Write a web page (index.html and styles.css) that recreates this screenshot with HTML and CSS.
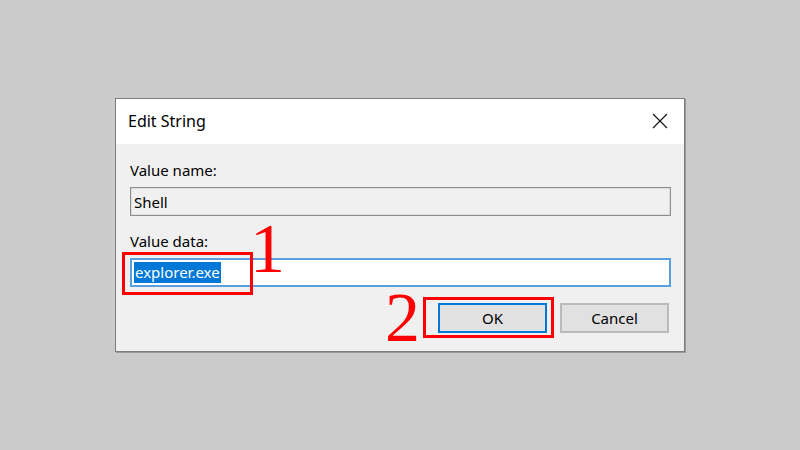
FILE: index.html
```html
<!DOCTYPE html>
<html>
<head>
<meta charset="utf-8">
<link rel="stylesheet" href="styles.css">
</head>
<body>
<div class="dialog">
  <div class="titlebar">
    <span class="title">Edit String</span>
    <svg class="close" width="16" height="16" viewBox="0 0 16 16"><path d="M1 1 L15 15 M15 1 L1 15" stroke="#1a1a1a" stroke-width="1.3" fill="none"/></svg>
  </div>
  <div class="content">
    <div class="label">Value name:</div>
    <div class="field disabled">Shell</div>
    <div class="label second">Value data:</div>
    <div class="field active"><span class="sel">explorer.exe</span></div>
    <div class="buttons">
      <div class="btn ok">OK</div>
      <div class="btn cancel">Cancel</div>
    </div>
  </div>
  <div class="mark rect1"></div>
  <div class="mark rect2"></div>
  <div class="num n1">1</div>
  <div class="num n2">2</div>
</div>
</body>
</html>
```
FILE: styles.css
```css
html, body {
  margin: 0;
  padding: 0;
}
body {
  background: #cbcbcb;
  width: 800px;
  height: 450px;
  overflow: hidden;
  font-family: "Noto Sans", "Open Sans", sans-serif;
  font-size: 15px;
  color: #000;
}
.dialog {
  position: relative;
  margin: 98px 0 0 115px;
  width: 568px;
  height: 252px;
  border: 1px solid #7d7d7d;
  box-shadow: 1px 1px 0 #9a9a9a;
  background: #f0f0f0;
  display: flex;
  flex-direction: column;
}
.titlebar {
  height: 45px;
  background: #fff;
  display: flex;
  align-items: center;
  justify-content: space-between;
  padding: 0 16px 0 12px;
}
.title {
  font-size: 16px;
  margin-top: -2px;
}
.close {
  margin-top: -1px;
}
.content {
  flex: 1;
  padding: 16px 13px 0 14px;
  display: flex;
  flex-direction: column;
}
.label {
  line-height: 20px;
  height: 20px;
}
.label.second {
  margin-top: 15px;
}
.field {
  margin-top: 7px;
  height: 29px;
  box-sizing: border-box;
  display: flex;
  align-items: center;
  padding-left: 3px;
}
.field.disabled {
  border: 1px solid #8e8e8e;
  box-shadow: inset 0 0 0 1px #dcdcdc;
  background: #f0f0f0;
}
.field.active {
  border: 2px solid #5aa0e0;
  background: #fff;
  padding-left: 2px;
}
.sel {
  background: #0078d7;
  color: #fff;
  line-height: 21px;
  padding: 0 1px;
}
.buttons {
  margin-top: 16px;
  display: flex;
  justify-content: flex-end;
  gap: 13px;
  padding-right: 2px;
}
.btn {
  width: 109px;
  height: 30px;
  box-sizing: border-box;
  background: #e1e1e1;
  display: flex;
  align-items: center;
  justify-content: center;
}
.btn.ok {
  border: 2px solid #0078d7;
}
.btn.cancel {
  border: 2px solid #bababa;
}
.mark {
  position: absolute;
  border: 3px solid #ff0000;
  box-sizing: border-box;
}
.rect1 {
  left: 6px;
  top: 153px;
  width: 131px;
  height: 43px;
}
.rect2 {
  left: 307px;
  top: 198px;
  width: 131px;
  height: 41px;
}
.num {
  position: absolute;
  font-family: "Liberation Serif", serif;
  font-size: 70px;
  line-height: 70px;
  color: #ff0000;
}
.n1 {
  left: 134px;
  top: 115px;
}
.n2 {
  left: 269px;
  top: 184px;
}
```
